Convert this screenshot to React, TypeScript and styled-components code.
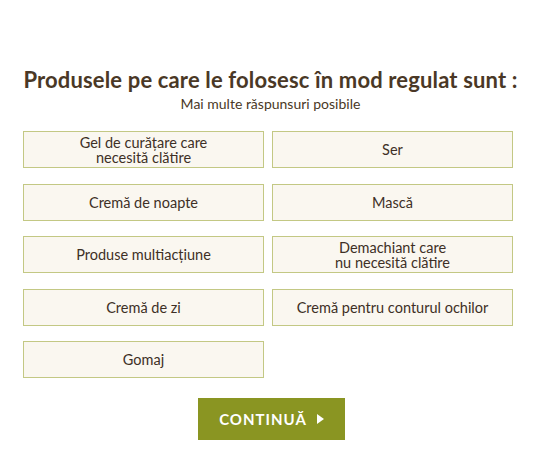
import styled, { createGlobalStyle } from 'styled-components';
import { Fragment } from 'react';

const options = [
  ['Gel de curățare care', 'necesită clătire'],
  ['Ser'],
  ['Cremă de noapte'],
  ['Mască'],
  ['Produse multiacțiune'],
  ['Demachiant care', 'nu necesită clătire'],
  ['Cremă de zi'],
  ['Cremă pentru conturul ochilor'],
  ['Gomaj'],
];

const GlobalStyle = createGlobalStyle`
  body {
    margin: 0;
    background: #ffffff;
    font-family: Lato, 'Liberation Sans', sans-serif;
  }
`;

const App = () => {
  return (
    <>
      <GlobalStyle />
      <StPage>
        <StTitle>Produsele pe care le folosesc în mod regulat sunt :</StTitle>
        <StSubtitle>Mai multe răspunsuri posibile</StSubtitle>
        <StGrid>
          {options.map((lines) => (
            <StOption key={lines.join(' ')}>
              <StLabel>
                {lines.map((line, i) => (
                  <Fragment key={line}>
                    {i > 0 && <br />}
                    {line}
                  </Fragment>
                ))}
              </StLabel>
            </StOption>
          ))}
        </StGrid>
        <StButton>
          CONTINUĂ
          <StArrow />
        </StButton>
      </StPage>
    </>
  );
};

const StPage = styled.div`
  width: 541px;
  height: 460px;
  display: flex;
  flex-direction: column;
  align-items: center;
  padding-top: 66px;
  box-sizing: border-box;
`;

const StTitle = styled.h1`
  margin: 0;
  font-size: 22px;
  font-weight: 700;
  color: #4a3826;
  line-height: 28px;
  letter-spacing: 0.15px;
`;

const StSubtitle = styled.div`
  font-size: 14px;
  color: #4a3826;
  line-height: 18px;
  margin-top: 1px;
`;

const StGrid = styled.div`
  display: grid;
  grid-template-columns: 241px 241px;
  column-gap: 8px;
  row-gap: 15.5px;
  margin-top: 18px;
  margin-left: -5px;
`;

const StOption = styled.div`
  height: 37px;
  box-sizing: border-box;
  border: 1px solid #c3c884;
  background: #faf7f0;
  display: flex;
  align-items: center;
  justify-content: center;
  color: #3e3026;
  text-align: center;
`;

const StLabel = styled.span`
  font-size: 14.5px;
  line-height: 15px;
`;

const StButton = styled.button`
  margin-top: 20px;
  margin-left: 2px;
  width: 147px;
  height: 42px;
  border: none;
  background: #8a9522;
  color: #ffffff;
  font-family: Lato, 'Liberation Sans', sans-serif;
  font-size: 15px;
  font-weight: 700;
  letter-spacing: 1px;
  display: flex;
  align-items: center;
  justify-content: center;
  gap: 10px;
  padding: 0;
`;

const StArrow = styled.span`
  width: 0;
  height: 0;
  border-top: 5px solid transparent;
  border-bottom: 5px solid transparent;
  border-left: 7px solid #ffffff;
`;

export default App;
